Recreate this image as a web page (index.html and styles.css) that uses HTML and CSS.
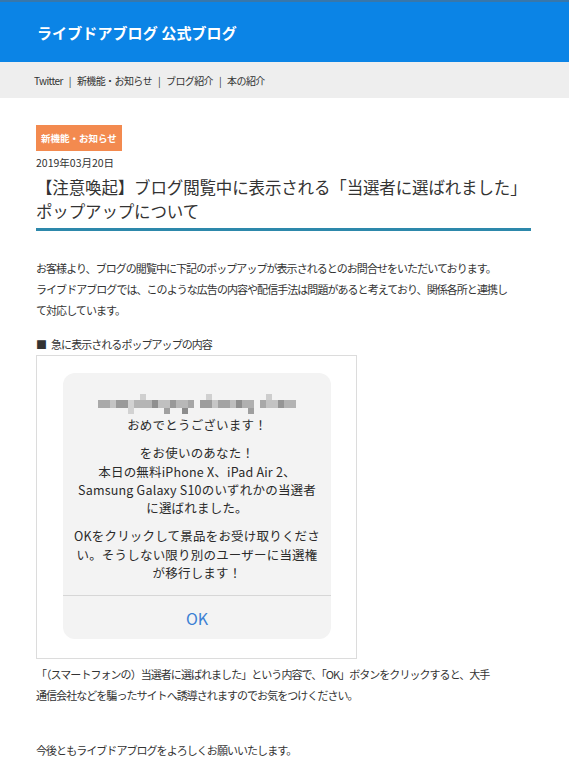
FILE: index.html
```html
<!DOCTYPE html>
<html lang="ja">
<head>
<meta charset="utf-8">
<title>ライブドアブログ 公式ブログ</title>
<link rel="stylesheet" href="styles.css">
</head>
<body>
<header class="site-header">
  <h1 class="site-title">ライブドアブログ 公式ブログ</h1>
</header>
<nav class="site-nav">
  <a>Twitter</a><span class="sep">|</span><a>新機能・お知らせ</a><span class="sep">|</span><a>ブログ紹介</a><span class="sep">|</span><a>本の紹介</a>
</nav>
<main class="article">
  <div class="badge">新機能・お知らせ</div>
  <div class="date">2019年03月20日</div>
  <h2 class="title">【注意喚起】ブログ閲覧中に表示される「当選者に選ばれました」<br>ポップアップについて</h2>
  <p class="text intro">お客様より、ブログの閲覧中に下記のポップアップが表示されるとのお問合せをいただいております。<br>ライブドアブログでは、このような広告の内容や配信手法は問題があると考えており、関係各所と連携し<br>て対応しています。</p>
  <p class="text caption"><span class="square">■</span>急に表示されるポップアップの内容</p>
  <div class="shot">
    <div class="popup">
      <div class="popup-body">
        <svg class="blur" width="198" height="20" viewBox="0 0 198 20" aria-hidden="true">
          <rect x="0" y="0" width="198" height="20" fill="#f3f3f3"/>
          <rect x="0" y="6" width="12" height="8" fill="#a9a9a9"/>
          <rect x="12" y="6" width="6" height="8" fill="#c4c4c4"/>
          <rect x="18" y="6" width="12" height="8" fill="#9a9a9a"/>
          <rect x="30" y="6" width="6" height="14" fill="#d2d2d2"/>
          <rect x="42" y="0" width="6" height="6" fill="#cfcfcf"/>
          <rect x="36" y="6" width="18" height="8" fill="#b5b5b5"/>
          <rect x="54" y="6" width="6" height="8" fill="#8f8f8f"/>
          <rect x="60" y="6" width="12" height="8" fill="#c0c0c0"/>
          <rect x="66" y="14" width="6" height="6" fill="#a0a0a0"/>
          <rect x="72" y="6" width="6" height="8" fill="#999"/>
          <rect x="78" y="6" width="12" height="8" fill="#b8b8b8"/>
          <rect x="84" y="14" width="6" height="6" fill="#8c8c8c"/>
          <rect x="90" y="6" width="6" height="8" fill="#a6a6a6"/>
          <rect x="102" y="6" width="12" height="8" fill="#9d9d9d"/>
          <rect x="108" y="0" width="6" height="6" fill="#d0d0d0"/>
          <rect x="114" y="6" width="6" height="8" fill="#c6c6c6"/>
          <rect x="120" y="6" width="12" height="8" fill="#a3a3a3"/>
          <rect x="132" y="6" width="6" height="8" fill="#bdbdbd"/>
          <rect x="138" y="6" width="6" height="8" fill="#8e8e8e"/>
          <rect x="144" y="6" width="12" height="8" fill="#b0b0b0"/>
          <rect x="150" y="14" width="6" height="6" fill="#9f9f9f"/>
          <rect x="162" y="6" width="6" height="8" fill="#a8a8a8"/>
          <rect x="168" y="0" width="6" height="6" fill="#cdcdcd"/>
          <rect x="168" y="6" width="12" height="8" fill="#c3c3c3"/>
          <rect x="180" y="6" width="6" height="8" fill="#959595"/>
          <rect x="186" y="6" width="12" height="8" fill="#b3b3b3"/>
        </svg>
        <p class="pline">おめでとうございます！</p>
        <p class="pline">をお使いのあなた！<br>本日の無料iPhone X、iPad Air 2、<br>Samsung Galaxy S10のいずれかの当選者<br>に選ばれました。</p>
        <p class="pline">OKをクリックして景品をお受け取りくださ<br>い。そうしない限り別のユーザーに当選権<br>が移行します！</p>
      </div>
      <div class="popup-btn">OK</div>
    </div>
  </div>
  <p class="text after">「（スマートフォンの）当選者に選ばれました」という内容で、「OK」ボタンをクリックすると、大手<br>通信会社などを騙ったサイトへ誘導されますのでお気をつけください。</p>
  <p class="text closing">今後ともライブドアブログをよろしくお願いいたします。</p>
</main>
</body>
</html>
```
FILE: styles.css
```css
body {
  margin: 0;
  font-family: "Noto Sans CJK JP", "Noto Sans", sans-serif;
  color: #333;
  background: #fff;
}

.site-header {
  height: 60px;
  border-top: 2px solid #3877ab;
  background: #0b84e6;
  display: flex;
  align-items: center;
  padding-left: 37px;
}

.site-title {
  margin: 0;
  color: #fff;
  font-size: 15px;
  font-weight: bold;
  letter-spacing: 0.1px;
}

.site-nav {
  height: 36px;
  background: #eeeeee;
  display: flex;
  align-items: center;
  padding-left: 34px;
  font-size: 10px;
  letter-spacing: -0.6px;
  color: #333;
}

.site-nav .sep {
  margin: 0 6px;
}

.article {
  padding: 25px 38px 20px 36px;
}

.badge {
  display: inline-block;
  background: #f38a4f;
  color: #fff;
  font-size: 9.5px;
  font-weight: bold;
  line-height: 26px;
  padding: 0 5px;
}

.date {
  margin-top: 4px;
  font-size: 10.5px;
  line-height: 16px;
}

.title {
  margin: 4px 0 0;
  font-size: 16.5px;
  font-weight: normal;
  line-height: 24px;
  padding-bottom: 5px;
  border-bottom: 3px solid #2d88ab;
  letter-spacing: -0.15px;
}

.text {
  margin: 0;
  font-size: 11px;
  letter-spacing: -0.95px;
  line-height: 21px;
}

.intro {
  margin-top: 27px;
}

.caption {
  margin-top: 13px;
}

.square {
  margin-right: 5px;
}

.shot {
  width: 321px;
  box-sizing: border-box;
  border: 1px solid #dcdcdc;
  padding: 17px 25px 19px 26px;
}

.popup {
  background: #f3f3f3;
  border-radius: 12px;
  height: 266px;
  display: flex;
  flex-direction: column;
}

.popup-body {
  flex: 1;
  display: flex;
  flex-direction: column;
  align-items: center;
  padding-top: 21px;
}

.blur {
  display: block;
  margin-bottom: 2px;
}

.pline {
  margin: 0 0 10px;
  font-size: 12.5px;
  line-height: 18.3px;
  color: #2a2a2a;
  text-align: center;
  letter-spacing: 0.2px;
}

.popup-btn {
  height: 43px;
  border-top: 1px solid #d6d6d6;
  display: flex;
  align-items: center;
  justify-content: center;
  font-size: 16px;
  color: #3b7fd4;
}

.after {
  margin-top: 5px;
}

.closing {
  margin-top: 34px;
}
```
